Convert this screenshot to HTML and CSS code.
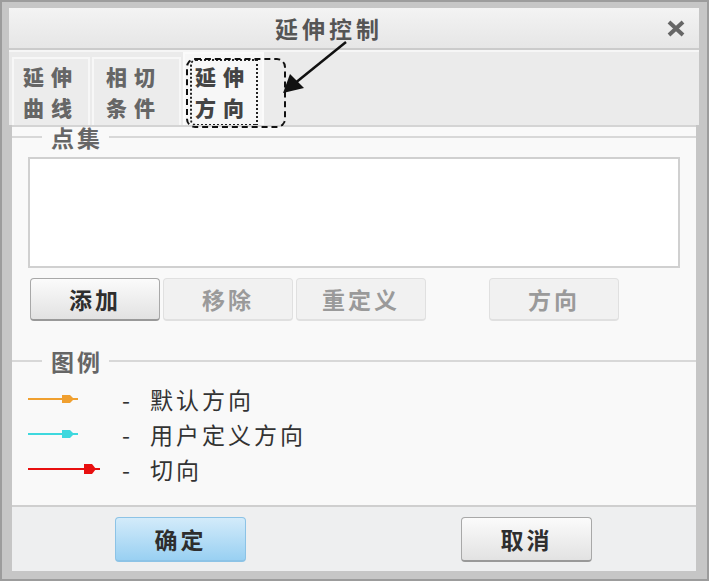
FILE: index.html
```html
<html>
<head>
	<meta charset="UTF-8">
	<link rel="stylesheet" href="styles.css">
</head>
<body>
	<div class="dialog">
		<div class="titlebar">
			<span class="title">延伸控制</span>
			<svg class="close" width="18" height="17" viewBox="0 0 18 17"><path d="M2 2 L16 15 M16 2 L2 15" stroke="#666" stroke-width="4"/></svg>
		</div>
		<div class="tabs">
			<div class="tab">延伸<br>曲线</div>
			<div class="tab">相切<br>条件</div>
			<div class="tab active"><span class="focus">延伸<br>方向</span></div>
		</div>
		<div class="panel">
			<div class="group-title"><span>点集</span></div>
			<div class="listbox"></div>
			<div class="btn-row">
				<button class="btn">添加</button>
				<button class="btn" disabled>移除</button>
				<button class="btn" disabled>重定义</button>
				<button class="btn spaced" disabled>方向</button>
			</div>
			<div class="group-title legend-title"><span>图例</span></div>
			<ul class="legend">
				<li>
					<svg class="arrow" width="80" height="12" viewBox="0 0 80 12"><line x1="0" y1="6" x2="50" y2="6" stroke="#f0a030" stroke-width="2"/><path d="M34 2 H42 L46 6 L42 10 H34 Z" fill="#f0a030"/></svg>
					<span class="dash">-</span><span>默认方向</span>
				</li>
				<li>
					<svg class="arrow" width="80" height="12" viewBox="0 0 80 12"><line x1="0" y1="6" x2="50" y2="6" stroke="#3ed8de" stroke-width="2"/><path d="M34 2 H42 L46 6 L42 10 H34 Z" fill="#3ed8de"/></svg>
					<span class="dash">-</span><span>用户定义方向</span>
				</li>
				<li>
					<svg class="arrow" width="80" height="12" viewBox="0 0 80 12"><line x1="0" y1="6" x2="72" y2="6" stroke="#e81010" stroke-width="2"/><path d="M56 1 H64 L68 6 L64 11 H56 Z" fill="#e81010"/></svg>
					<span class="dash">-</span><span>切向</span>
				</li>
			</ul>
		</div>
		<div class="footer">
			<button class="btn primary">确定</button>
			<button class="btn">取消</button>
		</div>
		<div class="callout"></div>
		<svg class="pointer" width="70" height="60" viewBox="0 0 70 60"><line x1="66" y1="2" x2="14" y2="44" stroke="#111" stroke-width="2.5"/><path d="M3 53 L10 34 L24 48 Z" fill="#111"/></svg>
	</div>
</body>
</html>
```

FILE: styles.css
```css
body {
	margin: 0;
	background: #fff;
}
.dialog {
	position: relative;
	box-sizing: border-box;
	width: 709px;
	height: 581px;
	border: 2px solid #9c9c9c;
	background: #c6c6c6;
	padding: 6px 8px 8px 7px;
	display: flex;
	flex-direction: column;
	font-family: "Noto Sans CJK SC", sans-serif;
}
.titlebar {
	height: 40px;
	flex: none;
	display: flex;
	align-items: center;
	justify-content: center;
	background: linear-gradient(#f3f3f3, #e6e6e6);
	border-bottom: 2px solid #cbcbcb;
	padding-right: 50px;
	position: relative;
}
.title {
	font-size: 23px;
	font-weight: bold;
	color: #555;
	letter-spacing: 4px;
}
.close {
	position: absolute;
	right: 14px;
	top: 12px;
}
.tabs {
	height: 73px;
	flex: none;
	display: flex;
	align-items: flex-end;
	gap: 2px;
	padding: 0 3px;
	background: #ebebeb;
	border-top: 2px solid #f6f6f6;
}
.tab {
	box-sizing: border-box;
	width: 78px;
	height: 68px;
	padding: 2px 0 0 9px;
	font-size: 21px;
	font-weight: 900;
	line-height: 31px;
	letter-spacing: 7px;
	color: #666;
	background: #ececec;
	border: 2px solid #f7f7f7;
	border-bottom: none;
}
.tab:nth-child(2) {
	width: 89px;
	padding-left: 12px;
}
.tab.active {
	width: 81px;
	height: 73px;
	padding: 5px 0 0 5px;
	background: #f7f7f7;
	border-color: #fbfbfb;
	color: #444;
}
.focus {
	display: block;
	width: 61px;
	padding: 0 0 1px 3px;
	border: 2px dotted #222;
	border-radius: 6px 0 0 6px;
}
.panel {
	flex: 1;
	margin: 0 3px;
	background: #f9f9f9;
	border-top: 2px solid #d4d4d4;
	border-bottom: 2px solid #cfcfcf;
	display: flex;
	flex-direction: column;
}
.group-title {
	display: flex;
	align-items: center;
	height: 24px;
	margin-top: -2px;
	font-size: 23px;
	font-weight: bold;
	color: #666;
	letter-spacing: 3px;
}
.group-title::before,
.group-title::after {
	content: "";
	height: 2px;
	background: #d8d8d8;
}
.group-title::before {
	width: 30px;
	margin-right: 9px;
}
.group-title::after {
	flex: 1;
	margin-left: 6px;
}
.listbox {
	height: 107px;
	margin: 8px 16px 0 16px;
	background: #fff;
	border: 2px solid #d0d0d0;
}
.btn-row {
	display: flex;
	gap: 3px;
	margin: 10px 0 0 18px;
}
.btn {
	box-sizing: border-box;
	width: 130px;
	height: 43px;
	font-family: "Noto Sans CJK SC", sans-serif;
	font-size: 23px;
	font-weight: bold;
	letter-spacing: 3px;
	color: #2e2e2e;
	background: linear-gradient(#fbfbfb, #e2e2e2);
	border: 1px solid #a8a8a8;
	border-bottom: 2px solid #999;
	border-radius: 4px;
	padding: 0;
}
.btn:disabled {
	color: #9a9a9a;
	background: #f1f1f1;
	border: 1px solid #e0e0e0;
	border-bottom: 2px solid #e0e0e0;
}
.btn.spaced {
	margin-left: 60px;
}
.legend-title {
	margin-top: 28px;
}
.legend {
	list-style: none;
	margin: 8px 0 0 0;
	padding: 0 0 0 16px;
}
.legend li {
	display: flex;
	align-items: center;
	height: 35px;
	font-size: 23px;
	color: #333;
	letter-spacing: 3px;
}
.arrow {
	width: 80px;
	margin-right: 14px;
}
.dash {
	width: 28px;
}
.footer {
	height: 64px;
	flex: none;
	margin: 0 3px;
	background: #eeeff0;
	display: flex;
	align-items: center;
	padding-left: 103px;
	gap: 215px;
}
.footer .btn {
	width: 131px;
	height: 45px;
	margin-top: 1px;
}
.footer .btn.primary {
	background: linear-gradient(#d3ebfa, #99d0f2);
	border: 1px solid #8cc3e6;
	border-bottom: 2px solid #8cc3e6;
}
.callout {
	position: absolute;
	left: 184px;
	top: 56px;
	width: 96px;
	height: 66px;
	border: 2px dashed #111;
	border-radius: 9px;
}
.pointer {
	position: absolute;
	left: 278px;
	top: 38px;
}
```
